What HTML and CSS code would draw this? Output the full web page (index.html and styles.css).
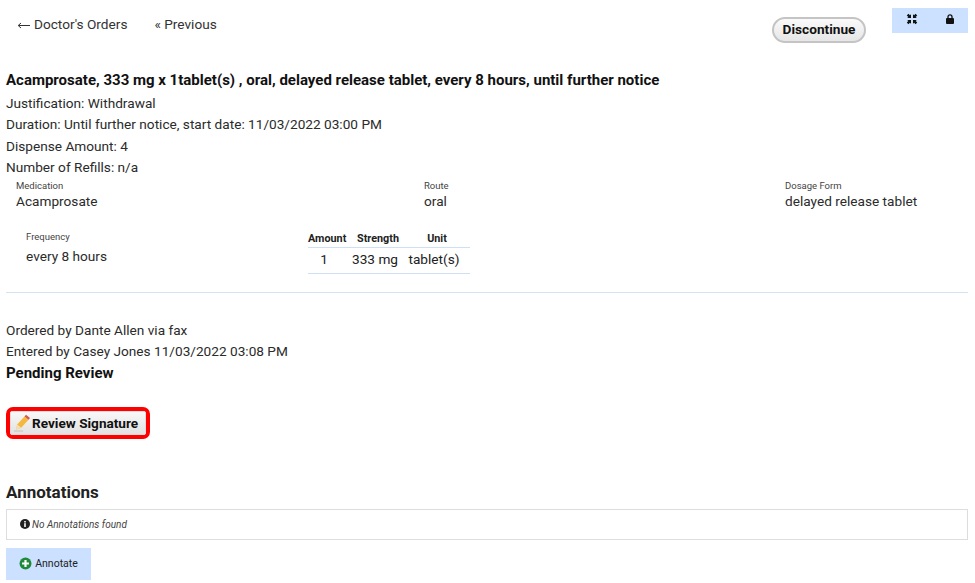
FILE: index.html
```html
<!DOCTYPE html>
<html lang="en">
<head>
<meta charset="utf-8">
<title>Order</title>
<link rel="stylesheet" href="styles.css">
</head>
<body>
<header class="top">
  <nav class="crumbs"><a class="crumb"><svg class="back" width="13" height="7" viewBox="0 0 13 7"><path d="M13 3.500H1.500M4 1L1.200 3.500 4 6" fill="none" stroke="#333" stroke-width="1"/></svg>Doctor's Orders</a><a class="crumb">« Previous</a></nav>
  <button class="pill">Discontinue</button>
  <div class="tools">
    <svg width="12" height="12" viewBox="0 0 12 12" fill="#111"><path d="M5 5H1.200l1.100-1.100L.8 2.400 2.400.8l1.500 1.500L5 1.200zM7 5V1.200l1.100 1.100L9.600.8l1.600 1.600-1.500 1.500L10.800 5zM5 7v3.800L3.900 9.700 2.400 11.200.8 9.600l1.500-1.500L1.200 7zM7 7h3.800L9.700 8.100l1.500 1.500-1.600 1.600-1.500-1.500L7 10.800z"/></svg>
    <svg width="8" height="10" viewBox="0 0 8 10"><path d="M2 4.500V2.800a2 2 0 0 1 4 0v1.700" fill="none" stroke="#111" stroke-width="1.300"/><rect y="4" width="8" height="6" rx="1" fill="#111"/></svg>
  </div>
</header>

<h1 class="title">Acamprosate, 333 mg x 1tablet(s) , oral, delayed release tablet, every 8 hours, until further notice</h1>
<p class="line">Justification: Withdrawal</p>
<p class="line">Duration: Until further notice, start date: 11/03/2022 03:00 PM</p>
<p class="line">Dispense Amount: 4</p>
<p class="line">Number of Refills: n/a</p>

<section class="fields">
  <div class="field f-med"><div class="lbl">Medication</div><div class="val">Acamprosate</div></div>
  <div class="field f-route"><div class="lbl">Route</div><div class="val">oral</div></div>
  <div class="field"><div class="lbl">Dosage Form</div><div class="val">delayed release tablet</div></div>
</section>

<section class="dose">
  <div class="field f-freq"><div class="lbl">Frequency</div><div class="val">every 8 hours</div></div>
  <table class="dtable">
    <thead><tr><th class="c-amt">Amount</th><th class="c-str">Strength</th><th class="c-unit">Unit</th></tr></thead>
    <tbody><tr><td>1</td><td>333 mg</td><td>tablet(s)</td></tr></tbody>
  </table>
</section>

<hr class="rule">

<p class="line">Ordered by Dante Allen via fax</p>
<p class="line">Entered by Casey Jones 11/03/2022 03:08 PM</p>
<p class="line strong">Pending Review</p>

<div class="hl">
  <button class="review">
    <svg width="16" height="18" viewBox="0 0 16 18"><path d="M0 17h9" stroke="#c9c2b4" stroke-width="1"/><path d="M2 15.500l1.200-5L10.500 2.500l4 3.300-7.300 8z" fill="#f5b83d"/><path d="M10.500 2.500l1.500-1.700 4 3.300-1.500 1.700z" fill="#d9534f"/><path d="M2 15.500l1.200-5 4 3.300z" fill="#f3dfb5"/></svg>
    Review Signature
  </button>
</div>

<h2 class="ann">Annotations</h2>
<div class="empty">
  <svg width="10" height="10" viewBox="0 0 10 10"><circle cx="5" cy="5" r="5" fill="#222"/><rect x="4.200" y="4.200" width="1.600" height="3.800" fill="#fff"/><rect x="4.200" y="2" width="1.600" height="1.500" fill="#fff"/></svg>
  <em>No Annotations found</em>
</div>
<button class="annotate">
  <svg width="13" height="13" viewBox="0 0 12 12"><circle cx="6" cy="6" r="5.500" fill="#1f8a3a"/><path d="M6 2.800v6.400M2.800 6h6.400" stroke="#fff" stroke-width="2"/></svg>
  Annotate
</button>
</body>
</html>
```
FILE: styles.css
```css
* { box-sizing: border-box; }
html, body { margin: 0; padding: 0; }
body {
  background: #fff;
  color: #222;
  font-family: Roboto, "Liberation Sans", sans-serif;
  font-size: 13.650px;
  padding: 0 6px;
  height: 583px;
  overflow: hidden;
}
.top { display: flex; align-items: flex-start; height: 71px; }
.crumbs { display: flex; gap: 27px; padding: 15.500px 0 0 11px; flex: 1; }
.crumb { line-height: 17px; font-size: 13.650px; color: #333; }
.back { margin-right: 4px; }
.pill {
  margin-top: 17px;
  width: 94px;
  height: 26px;
  border-radius: 13px;
  border: 2px solid #c4c4c4;
  background: linear-gradient(#fafafa, #e6e6e6);
  font: 700 13.650px Roboto, sans-serif;
  color: #111;
  padding: 0 0 2px;
}
.tools {
  margin: 8px 1px 0 26px;
  width: 76px;
  height: 25px;
  background: #cce0ff;
  display: flex;
  align-items: center;
  padding: 0 4px 3px 14px;
  gap: 28px;
}
.title { font-size: 15px; font-weight: 700; line-height: 19px; margin: 0 0 3px; color: #111; }
.line { margin: 0; font-size: 13.650px; line-height: 21.300px; color: #2b2b2b; }
.strong { font-weight: 700; font-size: 15px; color: #111; margin-top: 1px; }
.fields { display: flex; padding: 1.500px 0 0 10px; }
.field { display: flex; flex-direction: column; }
.f-med { width: 408px; }
.f-route { width: 361px; }
.lbl { font-size: 9.500px; line-height: 12px; color: #444; }
.val { font-size: 13.650px; line-height: 19px; color: #2b2b2b; }
.dose { display: flex; align-items: flex-start; padding: 20px 0 0 20px; }
.f-freq { width: 282px; }
.f-freq .val { margin-top: 4px; }
.dtable { border-collapse: collapse; table-layout: fixed; width: 162px; }
.dtable th {
  font-size: 10.800px;
  font-weight: 700;
  line-height: 14px;
  padding: 1px 0;
  border-bottom: 1px solid #cfe0f5;
  color: #222;
}
.c-amt { width: 44px; text-align: left; }
.c-str { width: 52px; }
.c-unit { width: 66px; }
.dtable td {
  font-size: 13.650px;
  line-height: 18px;
  text-align: center;
  padding: 2px 6px 5px 0;
  border-bottom: 1px solid #cfe0f5;
}
.dtable td:first-child { padding-right: 12px; }
.rule { border: 0; border-top: 1px solid #d4e3f3; margin: 18px 0 27px 0; width: 962px; }
.hl {
  margin-top: 22px;
  width: 144px;
  height: 32px;
  border: 4px solid #f00;
  border-radius: 7px;
  display: flex;
}
.review {
  flex: 1;
  display: flex;
  align-items: center;
  gap: 2px;
  border: 1px solid #ddd;
  border-radius: 2px;
  background: linear-gradient(#f8f8f8, #e2e2e2);
  font: 700 13.600px Roboto, sans-serif;
  color: #111;
  padding: 0 0 0 3px;
  white-space: nowrap;
}
.ann { font-size: 17px; font-weight: 700; line-height: 20px; margin: 43px 0 7px; color: #222; }
.empty {
  width: 962px;
  height: 31px;
  border: 1px solid #ddd;
  display: flex;
  align-items: center;
  gap: 2px;
  padding-left: 13px;
  font-size: 10px;
  color: #444;
}
.annotate {
  margin-top: 8px;
  width: 85px;
  height: 32px;
  background: #cce0ff;
  border: 0;
  display: flex;
  align-items: center;
  justify-content: center;
  gap: 3px;
  font: 400 10.500px Roboto, sans-serif;
  color: #222;
  padding: 0;
}
```
